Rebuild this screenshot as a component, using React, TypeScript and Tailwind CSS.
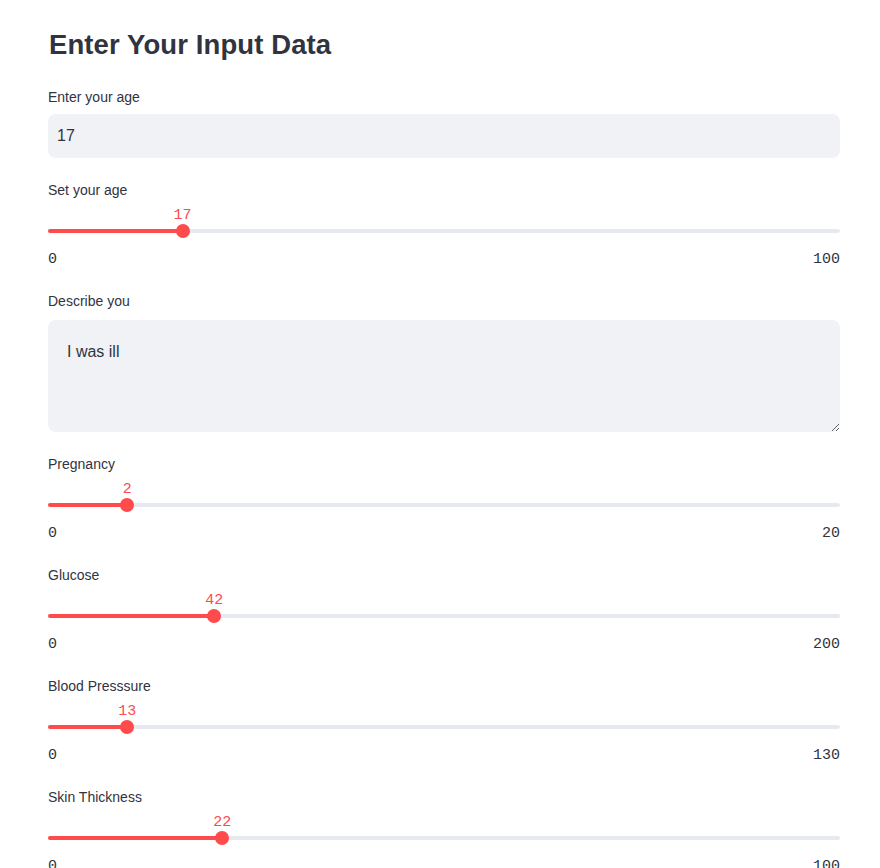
import React from "react";

interface SliderProps {
  label: string;
  value: number;
  min: number;
  max: number;
}

function Slider({ label, value, min, max }: SliderProps) {
  const pct = ((value - min) / (max - min)) * 100;

  return (
    <div className="flex flex-col">
      <div className="h-[20px] leading-[20px] text-[14px]">{label}</div>
      <div className="relative h-[36px] mt-[4px]">
        {/* value bubble */}
        <div
          className="absolute top-[2px] h-[20px] leading-[20px] -translate-x-1/2 font-['Liberation_Mono',monospace] text-[15px] text-[#ff4b4b]"
          style={{ left: `${pct}%` }}
        >
          {value}
        </div>
        {/* track */}
        <div className="absolute left-0 right-0 top-[25px] h-[4px] rounded-full bg-[#e6e9ef]" />
        <div
          className="absolute left-0 top-[25px] h-[4px] rounded-full bg-[#ff4b4b]"
          style={{ width: `${pct}%` }}
        />
        <div
          className="absolute top-[20px] w-[14px] h-[14px] -translate-x-1/2 rounded-full bg-[#ff4b4b]"
          style={{ left: `${pct}%` }}
        />
      </div>
      <div className="flex justify-between h-[19px] leading-[20px] mt-[10px] font-['Liberation_Mono',monospace] text-[15px]">
        <span>{min}</span>
        <span>{max}</span>
      </div>
    </div>
  );
}

export default function App() {
  return (
    <div className="min-h-screen bg-white text-[#31333f] font-['Liberation_Sans',Arial,sans-serif]">
      <div className="w-[792px] ml-[48px] pt-[25px] pb-[40px] flex flex-col gap-[22px]">
        <h2 className="h-[40px] leading-[40px] text-[27.5px] font-bold tracking-[0.1px] ml-[1px]">
          Enter Your Input Data
        </h2>

        {/* number input */}
        <div className="flex flex-col">
          <label className="h-[20px] leading-[20px] text-[14px]">
            Enter your age
          </label>
          <input
            type="text"
            defaultValue="17"
            readOnly
            className="mt-[7px] h-[44px] w-full rounded-lg bg-[#f0f2f6] pl-[9px] text-[16px] text-[#31333f] outline-none border-none"
          />
        </div>

        <Slider label="Set your age" value={17} min={0} max={100} />

        {/* text area */}
        <div className="flex flex-col">
          <label className="h-[20px] leading-[20px] text-[14px]">
            Describe you
          </label>
          <textarea
            defaultValue="I was ill"
            readOnly
            className="mt-[9px] h-[112px] w-full rounded-lg bg-[#f0f2f6] pl-[19px] pt-[20px] text-[16px] leading-[24px] text-[#31333f] outline-none border-none"
          />
        </div>

        <Slider label="Pregnancy" value={2} min={0} max={20} />
        <Slider label="Glucose" value={42} min={0} max={200} />
        <Slider label="Blood Presssure" value={13} min={0} max={130} />
        <Slider label="Skin Thickness" value={22} min={0} max={100} />
      </div>
    </div>
  );
}
